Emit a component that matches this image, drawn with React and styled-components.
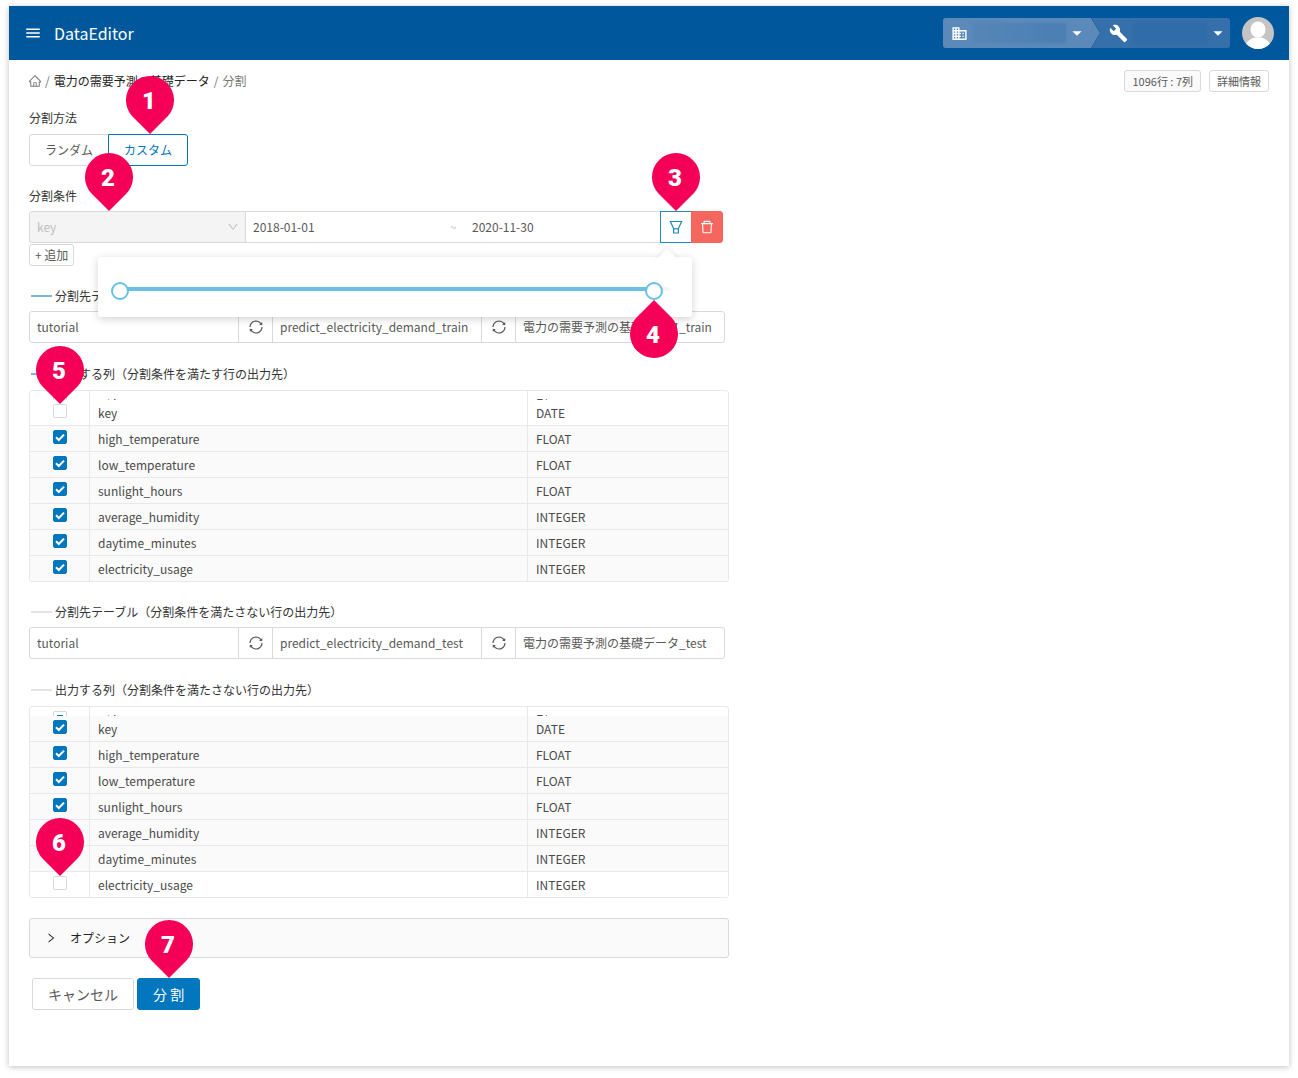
import React, { useState } from 'react'
import styled, { createGlobalStyle } from 'styled-components'
import {
  AiOutlineDelete,
  AiOutlineDown,
  AiOutlineHome,
  AiOutlineRight,
  AiOutlineSync,
} from 'react-icons/ai'
import { MdArrowDropDown, MdBuild, MdDomain, MdMenu } from 'react-icons/md'

const GlobalStyle = createGlobalStyle`
  * {
    box-sizing: border-box;
  }

  body {
    margin: 0;
    background: #fff;
    color: #333;
    font-family: "Noto Sans CJK JP", sans-serif;
    font-size: 12px;
    line-height: 20px;
  }

  button, input, select {
    font-family: inherit;
    font-size: inherit;
    line-height: inherit;
    color: inherit;
    margin: 0;
  }
`;

const Window = styled.div`
  position: relative;
  margin: 6px 9px 12px;
  background: #fff;
  box-shadow: 0 1px 6px rgba(0, 0, 0, 0.25);
`;

const Header = styled.header`
  display: flex;
  align-items: center;
  height: 54px;
  padding: 0 15px;
  background: #01579b;
  color: #fff;
`;

const MenuButton = styled.button`
  display: flex;
  padding: 0;
  border: none;
  background: none;
  color: #fff;
`;

const Brand = styled.h1`
  flex: 1;
  margin: 0 0 0 12px;
  font-size: 16px;
  font-weight: 400;
  line-height: 24px;
`;

const Switcher = styled.div`
  display: flex;
  height: 30px;
  margin-right: 12px;
  border-radius: 3px;
  overflow: hidden;
  background: #3670aa;
`;

const SwitchButton = styled.button`
  display: flex;
  align-items: center;
  width: ${props => props.$width};
  padding: 0 ${props => (props.$arrow ? '12px' : '1px')} 0 8px;
  border: none;
  background: ${props => (props.$arrow ? '#5b89b9' : 'transparent')};
  clip-path: ${props => (props.$arrow ? 'polygon(0 0, 148px 0, 100% 50%, 148px 100%, 0 100%)' : 'none')};
  color: #fff;
`;

const ArrowEdge = styled.svg`
  width: 10px;
  height: 30px;
  margin-left: -9px;
`;

const Redacted = styled.span`
  flex: 1;
  height: 20px;
  margin: 0 0 0 4px;
  background: ${props => props.$color};
  filter: blur(1px);
`;

const Main = styled.main`
  padding: 10px 20px 56px;
`;

const TopRow = styled.div`
  display: flex;
  align-items: center;
  justify-content: space-between;
  margin-bottom: 16px;
`;

const Breadcrumb = styled.nav`
  display: flex;
  align-items: center;
  gap: 4px;
  color: #777;

  a {
    display: flex;
    color: #777;
    text-decoration: none;
  }

  svg {
    margin: 0 -1px;
  }

  a + span + a {
    color: #222;
  }
`;

const SmallButtons = styled.div`
  display: flex;
  gap: 8px;
`;

const SmallButton = styled.button`
  height: 22px;
  padding: 0 7px;
  border: 1px solid #d9d9d9;
  border-radius: 3px;
  background: ${props => (props.$filled ? '#fafafa' : '#fff')};
  color: #595959;
  font-size: 11px;
`;

const AddButton = styled(SmallButton)`
  display: block;
  margin-top: 1px;
  padding: 0 5px;
  font-size: 12px;
`;

const Form = styled.form`
  max-width: 700px;
`;

const Field = styled.section`
  position: relative;
  margin-bottom: 20px;
`;

const TableField = styled(Field)`
  margin-top: 21px;
`;

const Label = styled.h2`
  display: flex;
  align-items: center;
  gap: 3px;
  margin: 0 0 5px;
  font-size: 12px;
  font-weight: 400;
  line-height: 20px;
`;

const Line = styled.span`
  width: 21px;
  height: 2px;
  margin-left: 2px;
  background: ${props => (props.$active ? '#7fb7db' : '#e4e4e4')};
`;

const RadioGroup = styled.div`
  display: flex;
  padding-top: 1px;
`;

const RadioLabel = styled.label`
  display: flex;
  align-items: center;
  justify-content: center;
  width: 80px;
  height: 32px;
  margin-right: -1px;
  border: 1px solid ${props => (props.$checked ? '#0277bd' : '#d9d9d9')};
  border-radius: ${props => (props.$checked ? '0 3px 3px 0' : '3px 0 0 3px')};
  color: ${props => (props.$checked ? '#0277bd' : '#595959')};
  z-index: ${props => (props.$checked ? 1 : 0)};

  input {
    position: absolute;
    opacity: 0;
  }
`;

const Group = styled.div`
  display: flex;
  height: 32px;
`;

const SelectBox = styled.div`
  position: relative;
  width: 217px;

  select {
    width: 100%;
    height: 32px;
    padding: 0 7px;
    appearance: none;
    border: 1px solid #d9d9d9;
    border-radius: 3px 0 0 3px;
    background: #f4f4f4;
    color: #bfbfbf;
    opacity: 1;
  }

  svg {
    position: absolute;
    top: 10px;
    right: 7px;
    color: #bfbfbf;
  }
`;

const DateRange = styled.div`
  display: flex;
  align-items: center;
  width: 416px;
  margin-left: -1px;
  border: 1px solid #d9d9d9;
  color: #bfbfbf;

  input {
    flex: 1;
    min-width: 0;
    height: 30px;
    padding: 0 7px 2px;
    border: none;
    background: none;
    color: #595959;
  }

  span {
    width: 24px;
    text-align: center;
  }
`;

const IconButton = styled.button`
  display: flex;
  align-items: center;
  justify-content: center;
  width: 32px;
  height: 32px;
  margin-left: -1px;
  padding: 0;
  border: 1px solid ${props => (props.$danger ? '#f5665f' : '#1e88c3')};
  border-radius: ${props => (props.$danger ? '0 3px 3px 0' : '0')};
  background: ${props => (props.$danger ? '#f5665f' : '#fff')};
  color: ${props => (props.$danger ? '#fff' : '#1e88c3')};
`;

const TextInput = styled.input`
  width: 210px;
  height: 32px;
  padding: 0 7px 2px;
  border: 1px solid #d9d9d9;
  border-radius: ${props => props.$radius || '0'};
  color: #595959;
`;

const SyncButton = styled.button`
  display: flex;
  align-items: center;
  justify-content: center;
  width: 35px;
  height: 32px;
  margin: 0 -1px;
  padding: 0;
  border: 1px solid #d9d9d9;
  background: #fff;
  color: #595959;
`;

const Popover = styled.div`
  position: absolute;
  z-index: 2;
  top: 71px;
  left: 69px;
  width: 594px;
  height: 60px;
  padding: 25px 13px 0;
  border-radius: 3px;
  background: #fff;
  box-shadow: 0 2px 8px rgba(0, 0, 0, 0.18);

  &::before {
    content: "";
    position: absolute;
    top: -5px;
    right: 17px;
    width: 16px;
    height: 16px;
    background: #fff;
    box-shadow: -2px -2px 5px rgba(0, 0, 0, 0.05);
    transform: rotate(45deg);
  }
`;

const Slider = styled.div`
  display: grid;
  width: 568px;
  height: 18px;
  align-items: center;

  > * {
    grid-area: 1 / 1;
  }
`;

const Rail = styled.div`
  height: 4px;
  margin: 0 9px 4px;
  border-radius: 2px;
  background: #f5f5f5;
`;

const Track = styled.div`
  height: 4px;
  background: #69c0e3;
`;

const Handle = styled.input`
  position: relative;
  width: 100%;
  height: 18px;
  appearance: none;
  background: none;
  pointer-events: none;

  &::-webkit-slider-thumb {
    appearance: none;
    width: 18px;
    height: 18px;
    border: 2px solid #69c0e3;
    border-radius: 50%;
    background: #fff;
    pointer-events: auto;
  }
`;

const TableFrame = styled.div`
  margin: 6px 0 0;
  border: 1px solid #e8e8e8;
  border-radius: 3px;
  overflow: hidden;
`;

const Table = styled.table`
  width: 100%;
  table-layout: fixed;
  border-collapse: separate;
  border-spacing: 0;
  color: #4a4a4a;

  th, td {
    padding: 0 8px;
    border-right: 1px solid #e8e8e8;
    text-align: left;
    font-weight: 400;
  }

  th:first-child, td:first-child {
    width: 60px;
    text-align: center;
  }

  th:nth-child(2) {
    width: 438px;
  }

  th:last-child, td:last-child {
    border-right: none;
  }
`;

const HeadClip = styled.div`
  height: 9px;
  padding-top: 4px;
  overflow: hidden;
  color: #222;
`;

const Row = styled.tr`
  background: ${props => (props.$checked ? '#fafafa' : '#fff')};

  td {
    height: 26px;
    border-bottom: 1px solid #e8e8e8;
  }

  &:last-child td {
    height: 25px;
    border-bottom: none;
  }
`;

const CheckBox = styled.span`
  display: grid;
  width: 14px;
  height: 14px;
  margin: 0 auto 3px;

  > * {
    grid-area: 1 / 1;
  }

  input {
    width: 14px;
    height: 14px;
    appearance: none;
    border: 1px solid #d9d9d9;
    border-radius: 2px;
    background: #fff;
  }

  input:checked {
    border-color: #0277bd;
    background: #0277bd;
  }

  svg {
    width: 14px;
    height: 14px;
    z-index: 1;
    pointer-events: none;
  }
`;

const Options = styled.button`
  display: flex;
  align-items: center;
  gap: 13px;
  width: 100%;
  height: 40px;
  margin-bottom: 20px;
  padding: 0 15px;
  border: 1px solid #d9d9d9;
  border-radius: 3px;
  background: #fafafa;
  color: #222;
`;

const Actions = styled.div`
  display: flex;
  gap: 3px;
  padding-left: 3px;
`;

const ActionButton = styled.button`
  height: 32px;
  padding: 0 15px;
  border: 1px solid ${props => (props.$primary ? '#0277bd' : '#d9d9d9')};
  border-radius: 3px;
  background: ${props => (props.$primary ? '#0277bd' : '#fff')};
  color: ${props => (props.$primary ? '#fff' : '#595959')};
  font-size: 14px;
`;

const PinMark = styled.div`
  position: absolute;
  z-index: 5;
  left: ${props => props.$x}px;
  top: ${props => props.$y}px;
  width: 48px;
  height: 58px;
  pointer-events: none;

  svg {
    position: absolute;
    inset: 0;
    transform: ${props => (props.$up ? 'rotate(180deg)' : 'none')};
  }

  span {
    position: absolute;
    top: ${props => (props.$up ? '10px' : '0')};
    left: 0;
    width: 46px;
    line-height: 50px;
    text-align: center;
    color: #fff;
    font-family: Roboto, sans-serif;
    font-size: 24px;
    font-weight: 900;
  }
`;

const Pin = ({ x, y, up, children }) => (
  <PinMark $x={x} $y={y} $up={up}>
    <svg width="48" height="58" viewBox="0 0 48 58" fill="#f50057">
      <path d="M24 58L6.5 40.5A24 24 0 1 1 41.5 40.5Z" />
    </svg>
    <span>{children}</span>
  </PinMark>
)

const FilterIcon = () => (
  <svg width="14" height="14" viewBox="0 0 14 14" fill="none" stroke="currentColor" strokeWidth="1.2">
    <path d="M1.4 1.5H12.6L9.4 8.6V13H4.6V8.6Z" />
    <path d="M4.6 8.8H9.4" />
  </svg>
)

const columns = [
  ['key', 'DATE'],
  ['high_temperature', 'FLOAT'],
  ['low_temperature', 'FLOAT'],
  ['sunlight_hours', 'FLOAT'],
  ['average_humidity', 'INTEGER'],
  ['daytime_minutes', 'INTEGER'],
  ['electricity_usage', 'INTEGER'],
]

const Check = ({ label, checked, partial, onChange }) => (
  <CheckBox>
    <input type="checkbox" aria-label={label} checked={checked} onChange={onChange} />
    <svg viewBox="0 0 14 14" fill="none" stroke="#fff" strokeWidth="2">
      {checked && <path d="M3 7.2L5.8 10L11 4.6" />}
      {partial && <path d="M4 5H10" stroke="#0277bd" />}
    </svg>
  </CheckBox>
)

const ColumnTable = ({ name, unchecked }) => {
  const [off, setOff] = useState([unchecked])
  const toggle = (key) => {
    setOff(off.includes(key) ? off.filter(k => k !== key) : [...off, key])
  }
  return (
    <TableFrame>
      <Table>
        <thead>
          <tr>
            <th><HeadClip><Check label={name} checked={false} partial onChange={() => setOff([])} /></HeadClip></th>
            <th><HeadClip>列名</HeadClip></th>
            <th><HeadClip>型</HeadClip></th>
          </tr>
        </thead>
        <tbody>
          {columns.map(([key, type]) => (
            <Row key={key} $checked={!off.includes(key)}>
              <td><Check label={key} checked={!off.includes(key)} onChange={() => toggle(key)} /></td>
              <td>{key}</td>
              <td>{type}</td>
            </Row>
          ))}
        </tbody>
      </Table>
    </TableFrame>
  )
}

const TargetInputs = ({ table, title }) => (
  <Group>
    <TextInput aria-label="データセット" defaultValue="tutorial" $radius="3px 0 0 3px" />
    <SyncButton type="button" aria-label="更新"><AiOutlineSync size={16} /></SyncButton>
    <TextInput aria-label="テーブル" defaultValue={table} />
    <SyncButton type="button" aria-label="更新"><AiOutlineSync size={16} /></SyncButton>
    <TextInput aria-label="名前" defaultValue={title} $radius="0 3px 3px 0" />
  </Group>
)

const DAYS = 1096

const App = () => {
  const [method, setMethod] = useState('custom')
  const [range, setRange] = useState([0, 1064])
  const start = (range[0] / DAYS) * 100
  const end = (range[1] / DAYS) * 100

  return (
    <>
      <GlobalStyle />
      <Window>
        <Header>
          <MenuButton aria-label="メニュー"><MdMenu size={18} /></MenuButton>
          <Brand>DataEditor</Brand>
          <Switcher>
            <SwitchButton $arrow $width="157px" aria-label="組織">
              <MdDomain size={17} />
              <Redacted $color="linear-gradient(90deg, #5686b7, #4a7fb4)" />
              <MdArrowDropDown size={22} />
            </SwitchButton>
            <ArrowEdge viewBox="0 0 10 30" fill="none" stroke="#01579b">
              <path d="M0 0L9 15L0 30" />
            </ArrowEdge>
            <SwitchButton $width="129px" aria-label="プロジェクト">
              <MdBuild size={19} />
              <Redacted $color="#2f6ca8" />
              <MdArrowDropDown size={22} />
            </SwitchButton>
          </Switcher>
          <svg width="32" height="32" viewBox="0 0 32 32">
            <clipPath id="avatar"><circle cx="16" cy="16" r="16" /></clipPath>
            <g clipPath="url(#avatar)">
              <rect width="32" height="32" fill="#c4c4c4" />
              <ellipse cx="16" cy="12.5" rx="7.5" ry="8" fill="#fff" />
              <path d="M3 32C3 24 9 22 12.5 20.5H19.5C23 22 29 24 29 32Z" fill="#fff" />
            </g>
          </svg>
        </Header>
        <Main>
          <TopRow>
            <Breadcrumb>
              <a href="#home" aria-label="ホーム"><AiOutlineHome size={14} /></a>
              <span>/</span>
              <a href="#table">電力の需要予測の基礎データ</a>
              <span>/</span>
              <span>分割</span>
            </Breadcrumb>
            <SmallButtons>
              <SmallButton $filled>1096行 : 7列</SmallButton>
              <SmallButton>詳細情報</SmallButton>
            </SmallButtons>
          </TopRow>
          <Form onSubmit={e => e.preventDefault()}>
            <Field>
              <Label>分割方法</Label>
              <RadioGroup>
                <RadioLabel $checked={method === 'random'}>
                  <input type="radio" name="method" checked={method === 'random'} onChange={() => setMethod('random')} />
                  ランダム
                </RadioLabel>
                <RadioLabel $checked={method === 'custom'}>
                  <input type="radio" name="method" checked={method === 'custom'} onChange={() => setMethod('custom')} />
                  カスタム
                </RadioLabel>
              </RadioGroup>
            </Field>
            <Field>
              <Label>分割条件</Label>
              <Group>
                <SelectBox>
                  <select disabled aria-label="列"><option>key</option></select>
                  <AiOutlineDown size={12} />
                </SelectBox>
                <DateRange>
                  <input aria-label="開始日" defaultValue="2018-01-01" />
                  <span>~</span>
                  <input aria-label="終了日" defaultValue="2020-11-30" />
                </DateRange>
                <IconButton type="button" aria-label="フィルター"><FilterIcon /></IconButton>
                <IconButton type="button" aria-label="削除" $danger><AiOutlineDelete size={16} /></IconButton>
              </Group>
              <AddButton type="button">+ 追加</AddButton>
              <Popover>
                <Slider>
                  <Rail>
                    <Track style={{ marginLeft: `${start}%`, width: `${end - start}%` }} />
                  </Rail>
                  <Handle type="range" aria-label="開始" max={DAYS} value={range[0]}
                    onChange={e => setRange([Number(e.target.value), range[1]])} />
                  <Handle type="range" aria-label="終了" max={DAYS} value={range[1]}
                    onChange={e => setRange([range[0], Number(e.target.value)])} />
                </Slider>
              </Popover>
            </Field>
            <Field>
              <Label><Line $active />分割先テーブル（分割条件を満たす行の出力先）</Label>
              <TargetInputs table="predict_electricity_demand_train" title="電力の需要予測の基礎データ_train" />
            </Field>
            <TableField>
              <Label><Line $active />出力する列（分割条件を満たす行の出力先）</Label>
              <ColumnTable name="すべての列（満たす行）" unchecked="key" />
            </TableField>
            <Field>
              <Label><Line />分割先テーブル（分割条件を満たさない行の出力先）</Label>
              <TargetInputs table="predict_electricity_demand_test" title="電力の需要予測の基礎データ_test" />
            </Field>
            <TableField>
              <Label><Line />出力する列（分割条件を満たさない行の出力先）</Label>
              <ColumnTable name="すべての列（満たさない行）" unchecked="electricity_usage" />
            </TableField>
            <Options type="button"><AiOutlineRight size={12} />オプション</Options>
            <Actions>
              <ActionButton type="button">キャンセル</ActionButton>
              <ActionButton type="submit" $primary>分 割</ActionButton>
            </Actions>
          </Form>
        </Main>
        <Pin x={117} y={70}>1</Pin>
        <Pin x={76} y={147}>2</Pin>
        <Pin x={643} y={147}>3</Pin>
        <Pin x={621} y={294} up>4</Pin>
        <Pin x={27} y={340}>5</Pin>
        <Pin x={27} y={812}>6</Pin>
        <Pin x={136} y={914}>7</Pin>
      </Window>
    </>
  )
}

export default App
